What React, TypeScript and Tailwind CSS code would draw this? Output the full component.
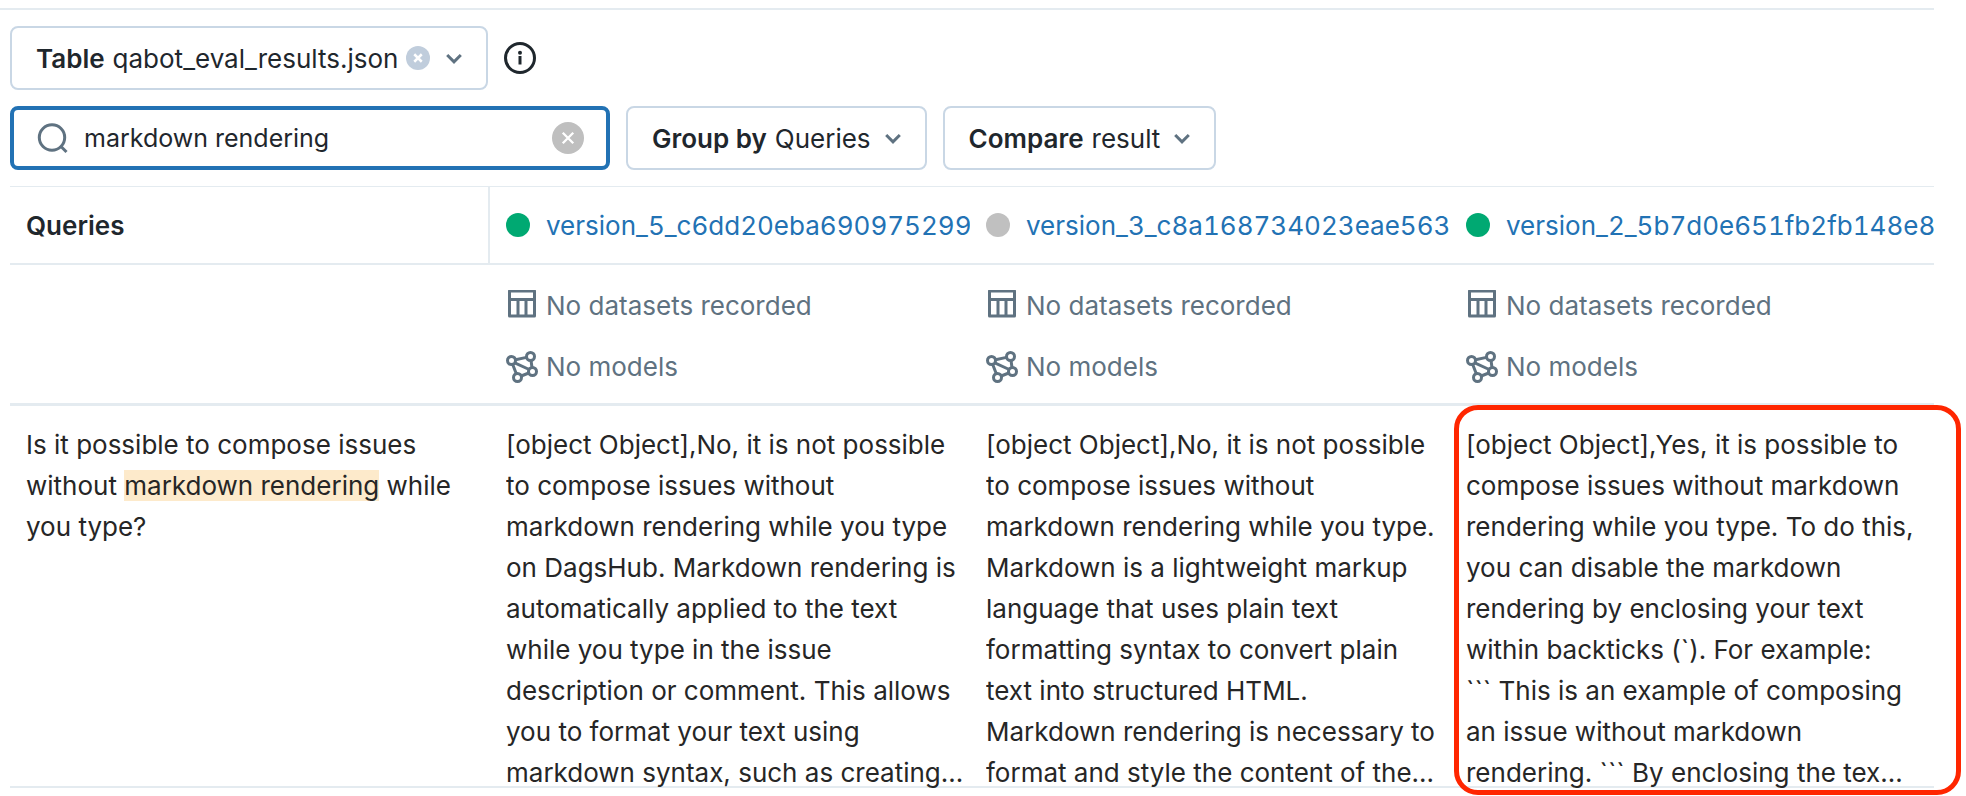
import type { ReactNode } from 'react';

type Version = {
  name: string;
  color: string;
  answer: string;
  flagged?: boolean;
};

const versions: Version[] = [
  {
    name: 'version_5_c6dd20eba6909752993',
    color: 'bg-[#00a972]',
    answer:
      '[object Object],No, it is not possible to compose issues without markdown rendering while you type on DagsHub. Markdown rendering is automatically applied to the text while you type in the issue description or comment. This allows you to format your text using markdown syntax, such as creating...',
  },
  {
    name: 'version_3_c8a168734023eae563c',
    color: 'bg-[#c0c0c0]',
    answer:
      '[object Object],No, it is not possible to compose issues without markdown rendering while you type. Markdown is a lightweight markup language that uses plain text formatting syntax to convert plain text into structured HTML.\nMarkdown rendering is necessary to format and style the content of the...',
  },
  {
    name: 'version_2_5b7d0e651fb2fb148e8',
    color: 'bg-[#00a972]',
    answer:
      '[object Object],Yes, it is possible to compose issues without markdown rendering while you type. To do this, you can disable the markdown rendering by enclosing your text within backticks (`). For example:\n``` This is an example of composing an issue without markdown rendering. ``` By enclosing the tex...',
    flagged: true,
  },
];

function ChevronIcon() {
  return (
    <svg className="w-4 h-4 shrink-0 text-[#5f7281]" viewBox="0 0 16 16" fill="none" stroke="currentColor" strokeWidth="3" aria-hidden="true">
      <path d="M1.2 5 8 11.8 14.8 5" />
    </svg>
  );
}

function SearchIcon() {
  return (
    <svg className="w-8 h-8 shrink-0 text-[#5f7281]" viewBox="0 0 32 32" fill="none" stroke="currentColor" strokeWidth="3" aria-hidden="true">
      <circle cx="16" cy="15.5" r="12.7" />
      <path d="m24.5 24 6 6" />
    </svg>
  );
}

function InfoIcon() {
  return (
    <svg className="w-8 h-8" viewBox="0 0 32 32" fill="none" stroke="currentColor" strokeWidth="3" aria-hidden="true">
      <circle cx="16" cy="16" r="14.5" />
      <path d="M16 14v8.5" />
      <circle cx="16" cy="10.7" r="2" fill="currentColor" stroke="none" />
    </svg>
  );
}

function DatasetIcon() {
  return (
    <svg className="w-8 h-8 shrink-0" viewBox="0 0 32 32" fill="none" stroke="currentColor" strokeWidth="3" strokeLinejoin="round" aria-hidden="true">
      <path d="M3.5 1h25v25h-25zM3.5 9.5h25M12 9.5V26M20 9.5V26" />
    </svg>
  );
}

function ModelIcon() {
  return (
    <svg className="w-8 h-8 shrink-0" viewBox="0 0 32 32" fill="none" stroke="currentColor" strokeWidth="3" aria-hidden="true">
      <circle cx="5.5" cy="9.5" r="4" />
      <circle cx="24.5" cy="5.5" r="4" />
      <circle cx="26.5" cy="20.5" r="4" />
      <circle cx="11.5" cy="26.5" r="4" />
      <path d="m9.5 8.7 11-2.3M25 9.5l1 7M8.8 11.8l14.4 6.7M6.7 13.5l3.5 9M15.2 25l7.6-3" />
    </svg>
  );
}

function CrossIcon({ className }: { className: string }) {
  return (
    <svg className={className} viewBox="0 0 12 12" fill="none" stroke="currentColor" aria-hidden="true">
      <path d="m1.5 1.5 9 9M10.5 1.5l-9 9" />
    </svg>
  );
}

function Dropdown({ label, value }: { label: string; value: string }) {
  return (
    <button
      type="button"
      aria-haspopup="listbox"
      className="flex items-center h-16 px-6 border-2 border-[#c9d7e5] rounded-lg whitespace-nowrap"
    >
      <span className="font-semibold mr-2">{label}</span>
      <span className="mr-3.5">{value}</span>
      <ChevronIcon />
    </button>
  );
}

function MetaRow({ icon, children }: { icon: ReactNode; children: ReactNode }) {
  return (
    <div className="flex items-center gap-2 text-[#5f7281]">
      {icon}
      <span>{children}</span>
    </div>
  );
}

export default function App() {
  return (
    <div className="bg-white py-2 text-[26px] leading-[41px] text-[#1f272d] font-[Inter,'Liberation_Sans',sans-serif]">
      <div className="mr-8 border-t-2 border-[#e4ebf0]" />

      <div className="pl-2.5 pr-8 pt-4">
        {/* Table picker */}
        <div className="flex items-center gap-4">
          <div className="flex items-center h-16 px-6 border-2 border-[#c9d7e5] rounded-lg whitespace-nowrap">
            <button type="button" aria-haspopup="listbox" className="flex items-center">
              <span className="font-semibold mr-2">Table</span>
              <span>qabot_eval_results.json</span>
            </button>
            <button
              type="button"
              aria-label="Clear table"
              className="flex items-center justify-center w-6 h-6 ml-2 mr-4 rounded-full bg-[#c0cddc] text-white"
            >
              <CrossIcon className="w-2.5 h-2.5 stroke-3" />
            </button>
            <ChevronIcon />
          </div>
          <button type="button" aria-label="About tables">
            <InfoIcon />
          </button>
        </div>

        {/* Filters */}
        <div className="flex items-center gap-4 mt-4">
          <div className="flex items-center w-[600px] h-16 px-[22px] border-4 border-[#2272b4] rounded-lg">
            <SearchIcon />
            <input
              type="text"
              aria-label="Search"
              defaultValue="markdown rendering"
              className="flex-1 min-w-0 ml-4 text-[25px] outline-none"
            />
            <button
              type="button"
              aria-label="Clear search"
              className="flex items-center justify-center w-8 h-8 rounded-full bg-[#bfbfbf] text-white"
            >
              <CrossIcon className="w-3.5 h-3.5 stroke-2" />
            </button>
          </div>
          <Dropdown label="Group by" value="Queries" />
          <Dropdown label="Compare" value="result" />
        </div>

        {/* Results */}
        <table className="w-full mt-4 table-fixed border-separate border-spacing-0 text-left">
          <colgroup>
            <col className="w-[480px]" />
            <col className="w-[480px]" />
            <col className="w-[480px]" />
            <col />
          </colgroup>
          <thead>
            <tr>
              <th className="h-[79px] pl-4 font-semibold border-t border-b-2 border-r-2 border-[#e4ebf0]">Queries</th>
              {versions.map((version) => (
                <th key={version.name} className="pl-4 font-normal border-t border-b-2 border-[#e4ebf0]">
                  <div className="flex items-center gap-4">
                    <span className={`w-6 h-6 shrink-0 rounded-full ${version.color}`} />
                    <a href="#" className="overflow-hidden whitespace-nowrap tabular-nums text-[#2272b4]">
                      {version.name}
                    </a>
                  </div>
                </th>
              ))}
            </tr>
          </thead>
          <tbody>
            <tr>
              <td className="border-b-[3px] border-[#e4ebf0]" />
              {versions.map((version) => (
                <td key={version.name} className="pl-4 pt-5 pb-4 border-b-[3px] border-[#e4ebf0]">
                  <div className="flex flex-col gap-5">
                    <MetaRow icon={<DatasetIcon />}>No datasets recorded</MetaRow>
                    <MetaRow icon={<ModelIcon />}>No models</MetaRow>
                  </div>
                </td>
              ))}
            </tr>
            <tr className="align-top text-[#262626]">
              <td className="pl-4 pr-5 pt-[18px] border-b-2 border-[#e4ebf0]">
                Is it possible to compose issues without <mark className="bg-[#fdeacb] text-inherit">markdown rendering</mark> while you type?
              </td>
              {versions.map((version) => (
                <td key={version.name} className="relative pl-4 pr-1 pt-[18px] border-b-2 border-[#e4ebf0]">
                  <p className="-mb-[7px] line-clamp-9 whitespace-pre-line">{version.answer}</p>
                  {version.flagged && (
                    <div className="absolute -top-px -bottom-[9px] left-1 -right-[27px] border-[5px] border-[#ff2600] rounded-3xl" />
                  )}
                </td>
              ))}
            </tr>
          </tbody>
        </table>
      </div>
    </div>
  );
}
